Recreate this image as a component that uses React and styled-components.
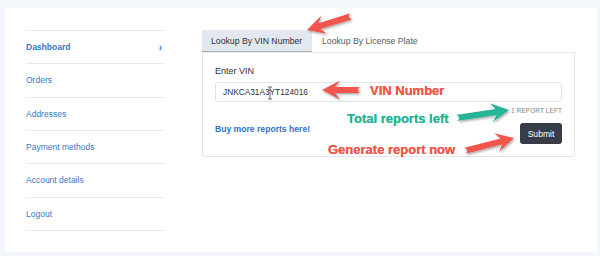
import React from "react";
import styled, { createGlobalStyle } from "styled-components";

const Global = createGlobalStyle`
  html, body { margin: 0; padding: 0; }
  body {
    background: #f3f7fb;
    font-family: "Liberation Sans", Arial, Helvetica, sans-serif;
    width: 600px;
    height: 256px;
    overflow: hidden;
  }
`;

const Root = styled.div`
  position: relative;
  width: 600px;
  height: 256px;
  padding: 8px 3px 4px 5px;
  box-sizing: border-box;
`;

const Panel = styled.div`
  background: #ffffff;
  height: 244px;
  display: flex;
  gap: 38px;
  padding: 22px 0 0 21px;
  box-sizing: border-box;
`;

const Nav = styled.ul`
  list-style: none;
  margin: 0;
  padding: 0;
  width: 138px;
  border-top: 1px solid #e8ebee;
`;

const NavItem = styled.li`
  height: 33.33px;
  box-sizing: border-box;
  border-bottom: 1px solid #e8ebee;
  display: flex;
  align-items: center;
  justify-content: space-between;
  font-size: 8.5px;
  color: #3877c4;
  font-weight: ${(p) => (p.$active ? 700 : 400)};
  padding-right: 2px;
`;

const Chevron = styled.span`
  font-size: 10px;
  color: #3877c4;
  font-weight: 700;
`;

const Content = styled.div`
  width: 373px;
  display: flex;
  flex-direction: column;
`;

const Tabs = styled.div`
  display: flex;
  height: 22px;
`;

const Tab = styled.div`
  display: flex;
  align-items: center;
  white-space: nowrap;
  padding: 0 9px 0 ${(p) => (p.$active ? "9px" : "10px")};
  font-size: 8.7px;
  color: ${(p) => (p.$active ? "#2d3035" : "#555a60")};
  background: ${(p) => (p.$active ? "#e3e8ef" : "transparent")};
  border-bottom: 1px solid ${(p) => (p.$active ? "#a9b1bc" : "transparent")};
  box-sizing: border-box;
  width: ${(p) => (p.$active ? "110px" : "auto")};
`;

const Card = styled.div`
  border: 1px solid #e3e5e8;
  border-top-color: #e6e8eb;
  border-radius: 0 0 4px 4px;
  height: 105px;
  box-sizing: border-box;
  padding: 13px 12px 0 12px;
  display: flex;
  flex-direction: column;
`;

const Label = styled.div`
  font-size: 9px;
  color: #2f3237;
  margin-bottom: 6px;
`;

const Input = styled.div`
  height: 20px;
  box-sizing: border-box;
  border: 1px solid #dfe2e6;
  border-radius: 3px;
  display: flex;
  align-items: center;
  padding-left: 7px;
  font-size: 8.3px;
  color: #2f3237;
`;

const Remaining = styled.div`
  text-align: right;
  font-size: 6.3px;
  letter-spacing: 0.2px;
  color: #7a7f86;
  margin-top: 5px;
`;

const Footer = styled.div`
  display: flex;
  justify-content: space-between;
  align-items: flex-start;
  margin-top: 9px;
`;

const BuyLink = styled.a`
  font-size: 8.6px;
  font-weight: 700;
  color: #2f72c0;
  text-decoration: none;
  padding-top: 1px;
`;

const Submit = styled.button`
  width: 42px;
  height: 21px;
  border: none;
  border-radius: 3px;
  background: #373c48;
  color: #ffffff;
  font-family: inherit;
  font-size: 8.6px;
  padding: 0;
`;

const Overlay = styled.svg`
  position: absolute;
  left: 0;
  top: 0;
  pointer-events: none;
`;

const Note = styled.span`
  position: absolute;
  font-size: 13px;
  font-weight: 700;
  line-height: 1;
  white-space: nowrap;
  color: ${(p) => p.$color};
  text-shadow: 0 0 0.3px ${(p) => p.$color};
`;

const RED = "#f0564c";
const GREEN = "#27b594";

function arrowPath(x1, y1, x2, y2, shaft = 6, headLen = 18, headW = 19) {
  const dx = x2 - x1;
  const dy = y2 - y1;
  const len = Math.hypot(dx, dy);
  const ux = dx / len;
  const uy = dy / len;
  const px = -uy;
  const py = ux;
  const bx = x2 - ux * headLen;
  const by = y2 - uy * headLen;
  const nx = x2 - ux * (headLen - 5);
  const ny = y2 - uy * (headLen - 5);
  const s = shaft / 2;
  const h = headW / 2;
  const pts = [
    [x1 + px * s, y1 + py * s],
    [nx + px * s, ny + py * s],
    [bx + px * h, by + py * h],
    [x2, y2],
    [bx - px * h, by - py * h],
    [nx - px * s, ny - py * s],
    [x1 - px * s, y1 - py * s],
  ];
  return (
    "M" +
    pts.map((p) => p[0].toFixed(1) + " " + p[1].toFixed(1)).join(" L") +
    ` A${s} ${s} 0 0 1 ${pts[0][0].toFixed(1)} ${pts[0][1].toFixed(1)} Z`
  );
}

const Arrow = ({ from, to, color }) => (
  <path d={arrowPath(from[0], from[1], to[0], to[1])} fill={color} filter="url(#sh)" />
);

const navItems = ["Dashboard", "Orders", "Addresses", "Payment methods", "Account details", "Logout"];

export default function App() {
  return (
    <>
      <Global />
      <Root>
        <Panel>
          <Nav>
            {navItems.map((n, i) => (
              <NavItem key={n} $active={i === 0}>
                <span>{n}</span>
                {i === 0 && <Chevron>›</Chevron>}
              </NavItem>
            ))}
          </Nav>
          <Content>
            <Tabs>
              <Tab $active>Lookup By VIN Number</Tab>
              <Tab>Lookup By License Plate</Tab>
            </Tabs>
            <Card>
              <Label>Enter VIN</Label>
              <Input>JNKCA31A3YT124016</Input>
              <Remaining>1 REPORT LEFT</Remaining>
              <Footer>
                <BuyLink href="#">Buy more reports here!</BuyLink>
                <Submit>Submit</Submit>
              </Footer>
            </Card>
          </Content>
        </Panel>

        <Overlay width="600" height="256" viewBox="0 0 600 256">
          <defs>
            <filter id="sh" x="-20%" y="-40%" width="140%" height="180%">
              <feDropShadow dx="1" dy="1.5" stdDeviation="1.2" floodColor="#000" floodOpacity="0.35" />
            </filter>
          </defs>
          <Arrow from={[352, 16]} to={[307, 30]} color={RED} />
          <Arrow from={[361, 90]} to={[322, 90]} color={RED} />
          <Arrow from={[456, 118]} to={[509, 110]} color={GREEN} />
          <Arrow from={[464, 151]} to={[514, 138]} color={RED} />
          <g stroke="#444" strokeWidth="0.8" fill="none">
            <path d="M268 87 L272 87 M270 87 L270 99 M268 99 L272 99" />
          </g>
        </Overlay>
        <Note $color={RED} style={{ left: 370, top: 84 }}>VIN Number</Note>
        <Note $color={GREEN} style={{ left: 347, top: 112 }}>Total reports left</Note>
        <Note $color={RED} style={{ left: 328, top: 143 }}>Generate report now</Note>
      </Root>
    </>
  );
}
